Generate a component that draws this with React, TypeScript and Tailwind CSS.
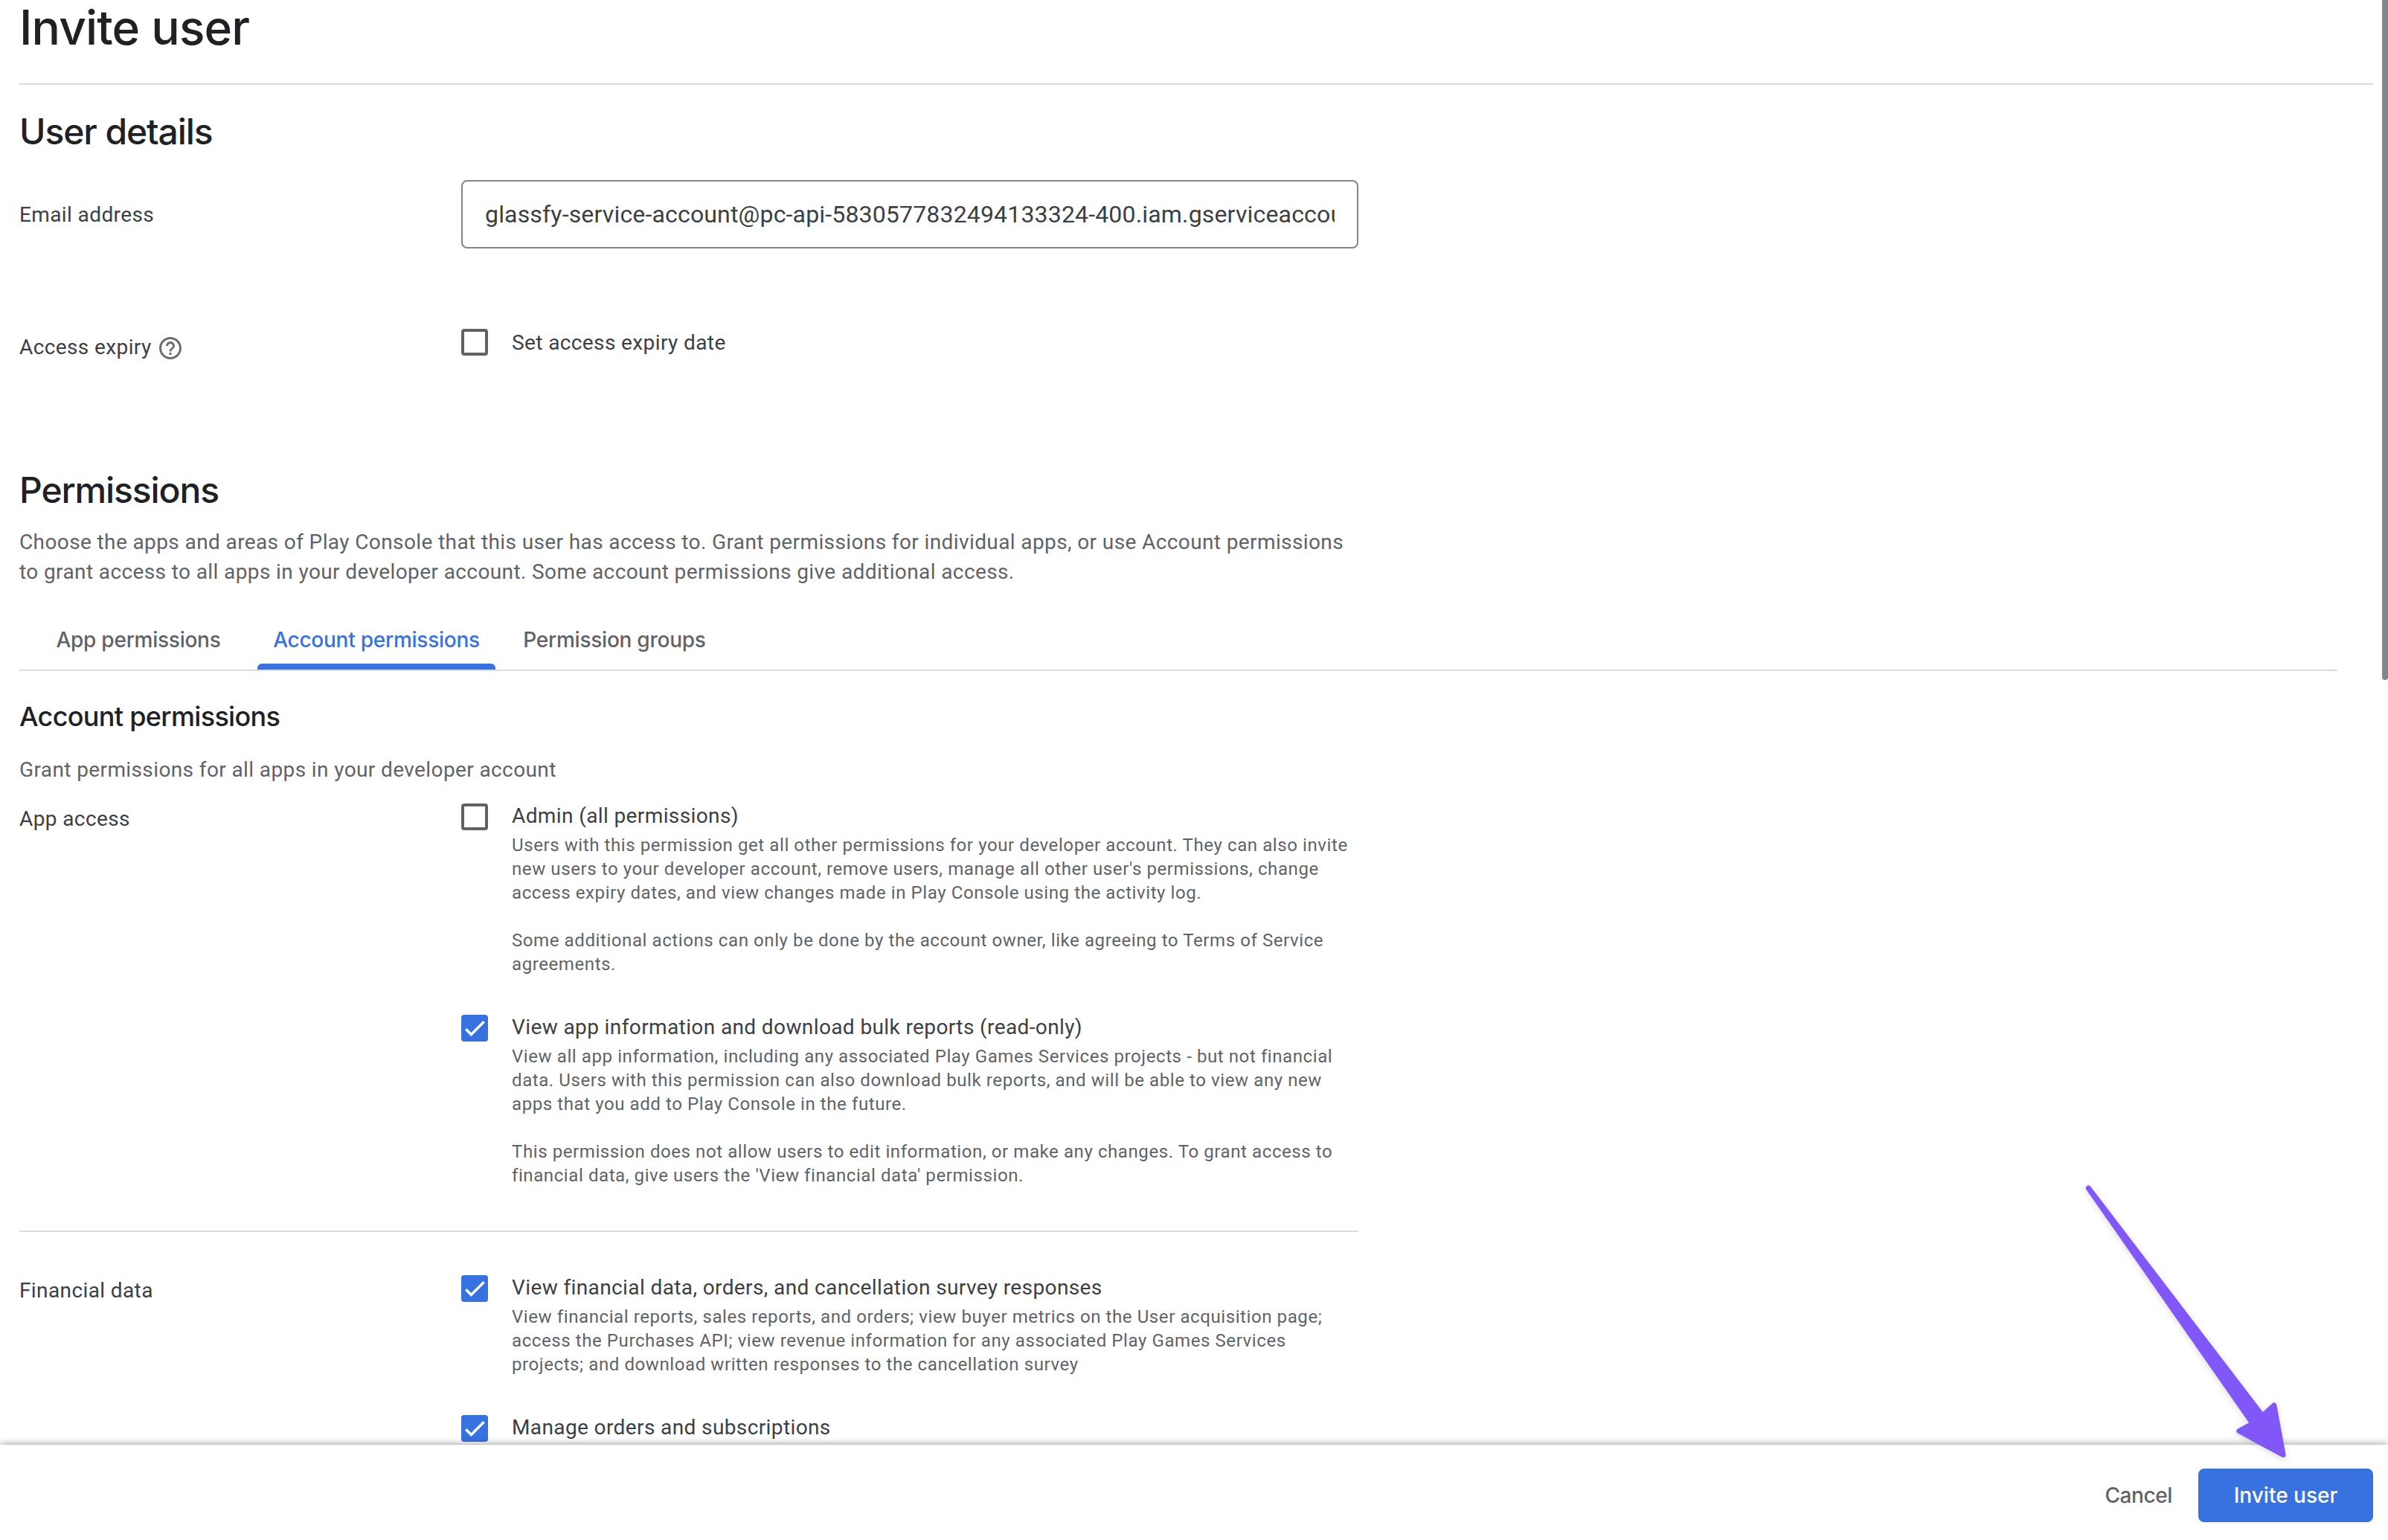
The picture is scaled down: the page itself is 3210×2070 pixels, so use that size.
import { ReactNode } from "react"

const ADMIN_TEXT = `Users with this permission get all other permissions for your developer account. They can also invite
new users to your developer account, remove users, manage all other user's permissions, change
access expiry dates, and view changes made in Play Console using the activity log.

Some additional actions can only be done by the account owner, like agreeing to Terms of Service
agreements.`

const VIEW_APP_TEXT = `View all app information, including any associated Play Games Services projects - but not financial
data. Users with this permission can also download bulk reports, and will be able to view any new
apps that you add to Play Console in the future.

This permission does not allow users to edit information, or make any changes. To grant access to
financial data, give users the 'View financial data' permission.`

const FINANCIAL_TEXT = `View financial reports, sales reports, and orders; view buyer metrics on the User acquisition page;
access the Purchases API; view revenue information for any associated Play Games Services
projects; and download written responses to the cancellation survey`

const Checkbox = ({ checked }: { checked?: boolean }) =>
  checked ? (
    <span className="size-9 shrink-0 rounded-sm bg-[#3871e0]">
      <svg viewBox="0 0 36 36" className="size-9" fill="none" stroke="#fff" strokeWidth="3.4">
        <path d="M6.2 19.2 L13.4 26.5 L30.6 9.3" />
      </svg>
    </span>
  ) : (
    <span className="size-9 shrink-0 rounded-sm border-4 border-[#5f6368]" />
  )

type PermissionProps = {
  label: string
  text?: string
  checked?: boolean
}

const Permission = ({ label, text, checked }: PermissionProps) => (
  <div className="flex gap-8">
    <div className="flex pt-1">
      <Checkbox checked={checked} />
    </div>
    <div className="pt-px">
      <p>{label}</p>
      {text && (
        <p className="mt-[3px] whitespace-pre text-2xl leading-8 tracking-[0.59px] text-[#5f6368]">{text}</p>
      )}
    </div>
  </div>
)

const Heading = ({ children }: { children: ReactNode }) => (
  <h2 className="font-['Inter',sans-serif] text-5xl leading-[62px] font-medium tracking-[-1.1px] text-[#202124]">
    {children}
  </h2>
)

const tabs = [
  { name: "App permissions", active: false },
  { name: "Account permissions", active: true },
  { name: "Permission groups", active: false },
]

const Tabs = () => (
  <div className="mt-[51px] mr-12 flex border-b-2 border-[#dadce0] font-['Inter',sans-serif] font-medium tracking-[-0.25px]">
    {tabs.map((tab) => (
      <div key={tab.name} className="w-80 text-center">
        <p className={tab.active ? "text-[#3871e0]" : "text-[#5f6368]"}>{tab.name}</p>
        <div className={tab.active ? "mt-3 h-2 rounded-t-md bg-[#3871e0]" : "mt-3 h-2"} />
      </div>
    ))}
  </div>
)

const HelpIcon = () => (
  <svg viewBox="0 0 24 24" className="size-9" fill="#6b6f74">
    <path d="M11 18h2v-2h-2v2zm1-16C6.48 2 2 6.48 2 12s4.48 10 10 10 10-4.48 10-10S17.52 2 12 2zm0 18c-4.41 0-8-3.59-8-8s3.59-8 8-8 8 3.59 8 8-3.59 8-8 8zm0-14c-2.21 0-4 1.79-4 4h2c0-1.1.9-2 2-2s2 .9 2 2c0 2-3 1.75-3 5h2c0-2.25 3-2.5 3-5 0-2.21-1.79-4-4-4z" />
  </svg>
)

const Arrow = () => (
  <svg
    viewBox="2790 1580 300 400"
    className="absolute left-[2790px] top-[1580px] h-[400px] w-[300px] drop-shadow-[0_2px_4px_rgba(0,0,0,0.15)]"
    fill="#8257f7"
    stroke="#8257f7"
    strokeWidth="7"
    strokeLinejoin="round"
  >
    <path d="M2807.3 1597 L3041.3 1903.2 L3056.8 1889 L3069 1955.5 L3009.8 1923.5 L3028.2 1913.5 Z" />
  </svg>
)

export default function App() {
  return (
    <div className="relative flex h-[2070px] w-[3210px] flex-col overflow-hidden bg-white font-['Roboto',sans-serif] text-[28px] leading-10 tracking-[0.39px] text-[#3c4043]">
      <main className="h-[1942px] overflow-hidden pr-5 pl-[26px]">
        <h1 className="border-b-2 border-[#dadce0] pb-[38px] font-['Inter',sans-serif] text-[64px] leading-[74px] font-medium tracking-[-0.9px] text-[#202124]">
          Invite user
        </h1>

        {/* User details */}
        <section className="mt-8">
          <Heading>User details</Heading>
          <div className="mt-[34px] flex items-center">
            <p className="w-[594px] pt-0.5">Email address</p>
            <div className="flex h-[92px] w-[1206px] items-center rounded-lg border-2 border-[#80868b] px-[30px]">
              <p className="overflow-hidden whitespace-nowrap text-[32px] tracking-[0.17px]">
                glassfy-service-account@pc-api-5830577832494133324-400.iam.gserviceaccount.com
              </p>
            </div>
          </div>
          <div className="mt-[104px] flex">
            <div className="flex w-[594px] gap-[7px] pt-[9px]">
              <p>Access expiry</p>
              <div className="pt-[3px]">
                <HelpIcon />
              </div>
            </div>
            <div className="flex gap-8 pt-[3px]">
              <div className="flex pt-px">
                <Checkbox />
              </div>
              <p>Set access expiry date</p>
            </div>
          </div>
        </section>

        {/* Permissions */}
        <section className="mt-[141px]">
          <Heading>Permissions</Heading>
          <p className="mt-[19px] w-[1800px] whitespace-pre-line text-[#5f6368]">
            {`Choose the apps and areas of Play Console that this user has access to. Grant permissions for individual apps, or use Account permissions
            to grant access to all apps in your developer account. Some account permissions give additional access.`}
          </p>
          <Tabs />
          <h3 className="mt-[37px] font-['Inter',sans-serif] text-4xl leading-[48px] font-medium tracking-[-0.68px] text-[#202124]">
            Account permissions
          </h3>
          <p className="mt-7 text-[#5f6368]">Grant permissions for all apps in your developer account</p>

          <div className="mt-[21px] flex w-[1800px] border-b-2 border-[#dadce0] pb-[58px]">
            <p className="w-[594px] pt-[5px]">App access</p>
            <div className="flex flex-col gap-12">
              <Permission label="Admin (all permissions)" text={ADMIN_TEXT} />
              <Permission
                label="View app information and download bulk reports (read-only)"
                text={VIEW_APP_TEXT}
                checked
              />
            </div>
          </div>

          <div className="mt-[54px] flex w-[1800px]">
            <p className="w-[594px] pt-[5px]">Financial data</p>
            <div className="flex flex-col gap-12">
              <Permission
                label="View financial data, orders, and cancellation survey responses"
                text={FINANCIAL_TEXT}
                checked
              />
              <Permission label="Manage orders and subscriptions" checked />
            </div>
          </div>
        </section>
      </main>

      <footer className="relative flex h-32 items-start justify-end gap-[35px] bg-white pt-8 pr-5 font-['Inter',sans-serif] font-medium tracking-normal shadow-[0_0_10px_rgba(0,0,0,0.45)]">
        <button className="h-[72px] tracking-[-0.4px] text-[#5f6368]">Cancel</button>
        <button className="h-[72px] w-[235px] rounded-lg bg-[#3871e0] text-white">Invite user</button>
      </footer>

      {/* Scrollbar thumb */}
      <div className="absolute top-0 right-0 h-[914px] w-2 rounded-b-full bg-[#80868b]" />
      <Arrow />
    </div>
  )
}
